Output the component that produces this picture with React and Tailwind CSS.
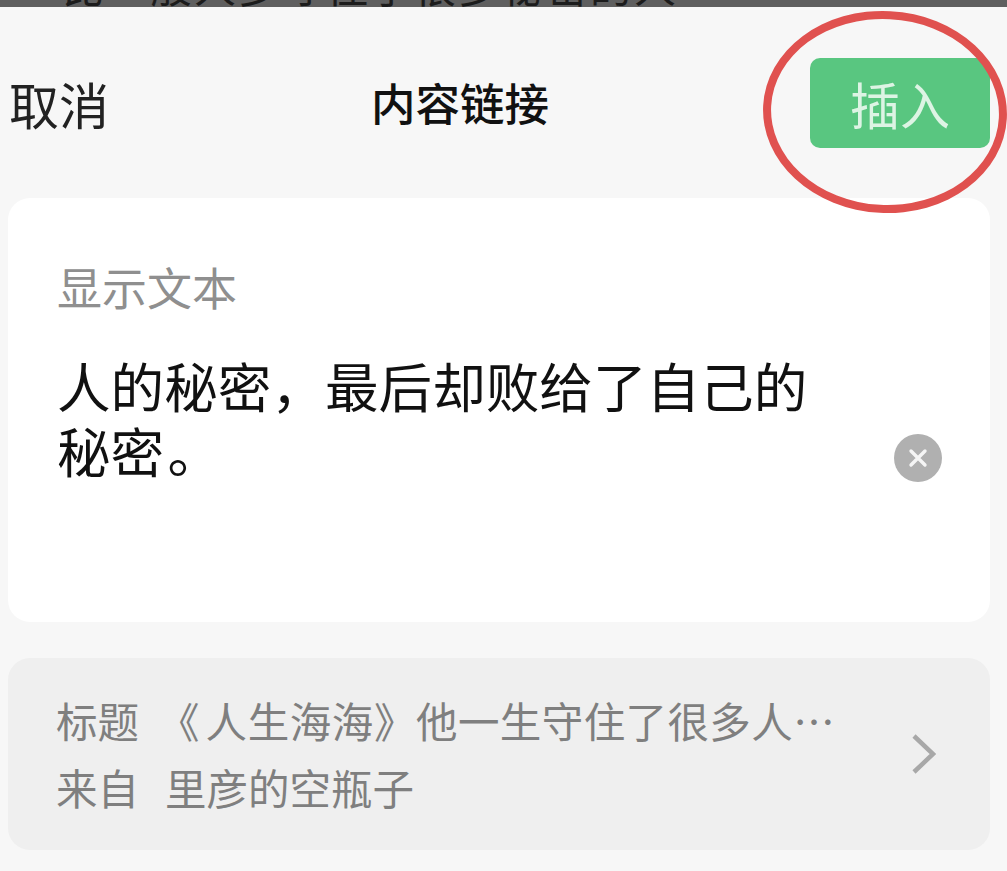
export default function App() {
  return (
    <div className="relative w-[1007px] h-[871px] overflow-hidden bg-[#f7f7f7] font-['Noto_Sans_CJK_SC','Noto_Sans',sans-serif]">
      <div className="h-[7px] bg-[#5f5f5f] overflow-hidden pl-[62px]">
        <div className="-mt-[37px] text-[42px] leading-[44px] whitespace-nowrap text-[#1c1c1c] tracking-[2px]">
          比一般人多守住了很多秘密的人
        </div>
      </div>

      <div className="flex items-center justify-between h-[90px] mt-[51px] pl-[9px] pr-[17px]">
        <span className="text-[50px] leading-none text-[#222222]">取消</span>
        <span className="text-[44.5px] leading-none font-medium text-[#111111] ml-[1px] -mt-[2px]">内容链接</span>
        <button className="w-[180px] h-[90px] rounded-[10px] bg-[#59c680] text-[#ddf4e4] text-[50px] leading-none">
          插入
        </button>
      </div>

      <div className="mt-[50px] mx-[8px] w-[982px] h-[424px] rounded-[22px] bg-white pl-[49px] pr-[48px] pt-[64px] flex flex-col">
        <div className="text-[45px] leading-[50px] text-[#8f8f8f]">显示文本</div>
        <div className="flex items-start justify-between mt-[40px]">
          <div className="w-[770px] text-[53.6px] leading-[65px] text-[#111111]">
            人的秘密，最后却败给了自己的秘密{"\u200A"}。
          </div>
          <div className="w-[48px] h-[48px] rounded-full bg-[#b0b0b0] flex items-center justify-center mt-[82px]">
            <svg width="20" height="20" viewBox="0 0 20 20" fill="none" stroke="#f5f5f5" strokeWidth="3.4" strokeLinecap="round">
              <path d="M3 3 L17 17 M17 3 L3 17" />
            </svg>
          </div>
        </div>
      </div>

      <div className="mt-[36px] mx-[8px] w-[982px] h-[192px] rounded-[22px] bg-[#efefef] pl-[48px] pr-[54px] flex items-center justify-between">
        <div className="text-[41.5px] leading-[67px] text-[#7f7f7f] whitespace-nowrap">
          <div>
            标题
            <span className="ml-[19px] mr-[6px]">《</span>
            <span className="tracking-[0.6px]">人生海海》</span>
            <span className="tracking-[0.4px]">他一生守住了很多人…</span>
          </div>
          <div>来自<span className="ml-[26px]">里彦的空瓶子</span></div>
        </div>
        <svg width="24" height="40" viewBox="0 0 24 40" fill="none" stroke="#a8a8a8" strokeWidth="4.5">
          <path d="M2 2 L21 20 L2 38" />
        </svg>
      </div>

      <div className="absolute left-[763px] top-[11px] w-[244px] h-[202px] rounded-[50%] border-[8px] border-[#e0514f] rotate-[3deg]" />
    </div>
  );
}
